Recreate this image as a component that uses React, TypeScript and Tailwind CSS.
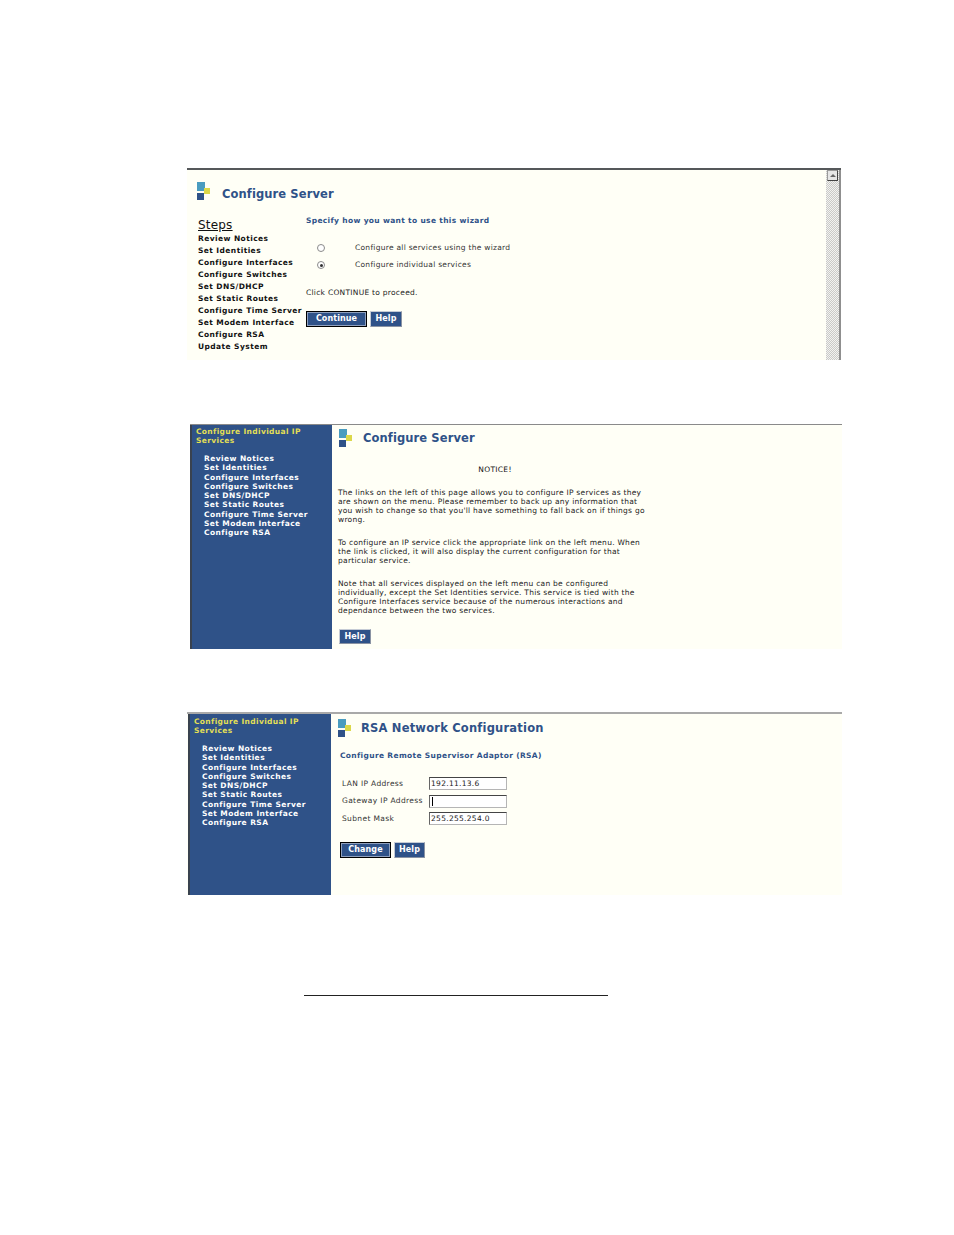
const font = { fontFamily: '"DejaVu Sans", Verdana, sans-serif' };

const wizardSteps = [
  "Review Notices",
  "Set Identities",
  "Configure Interfaces",
  "Configure Switches",
  "Set DNS/DHCP",
  "Set Static Routes",
  "Configure Time Server",
  "Set Modem Interface",
  "Configure RSA",
  "Update System",
];
const menuItems = wizardSteps.slice(0, 9);

const Logo = () => (
  <svg width="14" height="18" viewBox="0 0 14 18" className="shrink-0">
    <rect x="0" y="0" width="8" height="9" fill="#4a9cc0" />
    <rect x="7" y="6" width="6" height="6" fill="#dcd84a" />
    <rect x="0" y="11" width="7" height="7" fill="#2f5288" />
  </svg>
);

const BlueButton = ({ label, active, className }: { label: string; active?: boolean; className: string }) => (
  <div
    className={`flex items-center justify-center bg-[#2f5288] text-[8px] font-bold tracking-[0.1px] text-white ${
      active ? "border border-black shadow-[inset_0_0_0_1px_#8fa0bd]" : "border border-[#8a93a3] border-t-[#c5cbd5] border-l-[#c5cbd5]"
    } ${className}`}
  >
    {label}
  </div>
);

const Sidebar = ({ className }: { className: string }) => (
  <div className={`${className} shrink-0 border-l-2 border-[#39424f] bg-[#2f5288] pl-[4px]`}>
    <div className="text-[7.5px] leading-[8.5px] font-bold tracking-[0.35px] text-[#e3df55]">
      Configure Individual IP
      <br />
      Services
    </div>
    <div className="mt-[10px] ml-[8px] flex flex-col gap-[1.3px]">
      {menuItems.map((item) => (
        <div key={item} className="text-[7.5px] leading-[8px] font-bold tracking-[0.42px] whitespace-nowrap text-white">
          {item}
        </div>
      ))}
    </div>
  </div>
);

const Radio = ({ checked }: { checked?: boolean }) => (
  <div className="flex h-[8px] w-[8px] items-center justify-center rounded-full border border-[#8a8a8a] bg-white">
    {checked && <div className="h-[3px] w-[3px] rounded-full bg-[#333]" />}
  </div>
);

const Field = ({ label, value, focus }: { label: string; value: string; focus?: boolean }) => (
  <div className="flex h-[13px] items-center">
    <div className="w-[89px] pl-[2px] text-[7.5px] tracking-[0.35px] whitespace-nowrap text-[#333]">{label}</div>
    <div className="flex h-[13px] w-[78px] items-center border border-[#b5b5b5] border-t-[#444] border-l-[#666] bg-white pl-[1px] text-[7.5px] tracking-[0.3px] text-[#222]">
      {focus ? <div className="ml-[1px] h-[9px] w-px bg-black" /> : value}
    </div>
  </div>
);

const App = () => {
  return (
    <div className="h-[1235px] w-[954px] overflow-hidden bg-white pt-[168px]" style={font}>
      {/* wizard panel */}
      <div className="ml-[187px] flex h-[192px] w-[654px] border-t-2 border-t-[#55585a] bg-[#fffff6]">
        <div className="flex-1 pl-[11px]">
          <div className="mt-[12px] ml-[-1px] flex items-start gap-[11px]">
            <Logo />
            <div className="mt-[5px] text-[11.5px] leading-[14px] font-bold tracking-[0.1px] text-[#2f5288]">
              Configure Server
            </div>
          </div>
          <div className="mt-[17px] flex">
            <div className="w-[108px]">
              <div className="text-[12px] leading-[14px] tracking-[0.2px] text-[#111] underline">Steps</div>
              <div className="mt-[1px] flex flex-col">
                {wizardSteps.map((step) => (
                  <div key={step} className="h-[12px] text-[7.5px] leading-[12px] font-bold tracking-[0.42px] whitespace-nowrap text-[#111]">
                    {step}
                  </div>
                ))}
              </div>
            </div>
            <div className="flex-1">
              <div className="mt-[-2px] text-[7.5px] leading-[10px] font-bold tracking-[0.33px] text-[#2f5288]">
                Specify how you want to use this wizard
              </div>
              <div className="mt-[17px] flex items-center text-[7.5px] leading-[10px] tracking-[0.27px] text-[#333]">
                <div className="ml-[11px] w-[38px]">
                  <Radio />
                </div>
                Configure all services using the wizard
              </div>
              <div className="mt-[7px] flex items-center text-[7.5px] leading-[10px] tracking-[0.27px] text-[#333]">
                <div className="ml-[11px] w-[38px]">
                  <Radio checked />
                </div>
                Configure individual services
              </div>
              <div className="mt-[18px] text-[7.5px] leading-[10px] tracking-[0.27px] text-[#222]">
                Click CONTINUE to proceed.
              </div>
              <div className="mt-[13px] flex gap-[3px]">
                <BlueButton label="Continue" active className="h-[16px] w-[61px]" />
                <BlueButton label="Help" className="h-[16px] w-[32px]" />
              </div>
            </div>
          </div>
        </div>
        <div className="w-[15px] shrink-0 border-r-2 border-r-[#8f8f8f] bg-[repeating-conic-gradient(#c9c9c7_0_25%,#f2f2f0_0_50%)] bg-[length:2px_2px]">
          <div className="flex h-[11px] w-[11px] translate-x-[1px] items-center justify-center border border-[#9a9a9a] border-r-[#444] border-b-[#444] bg-[#e6e6e6]">
            <div className="h-0 w-0 border-x-[3px] border-b-[3px] border-x-transparent border-b-[#666]" />
          </div>
        </div>
      </div>

      {/* notice panel */}
      <div className="mt-[64px] ml-[190px] flex h-[225px] w-[652px] border-t border-t-[#8a8a8a] bg-[#fffff6]">
        <Sidebar className="w-[142px] pt-[3px]" />
        <div className="flex-1 pl-[6px]">
          <div className="mt-[4px] ml-[1px] flex items-start gap-[10px]">
            <Logo />
            <div className="mt-[2px] text-[11.5px] leading-[14px] font-bold tracking-[0.1px] text-[#2f5288]">
              Configure Server
            </div>
          </div>
          <div className="mt-[18px] w-[314px] text-center text-[7.5px] leading-[10px] tracking-[0.3px] text-[#111]">NOTICE!</div>
          <div className="mt-[13px] w-[312px] text-[7.5px] leading-[9px] tracking-[0.26px] whitespace-nowrap text-[#222]">
            The links on the left of this page allows you to configure IP services as they
            <br />
            are shown on the menu. Please remember to back up any information that
            <br />
            you wish to change so that you'll have something to fall back on if things go
            <br />
            wrong.
          </div>
          <div className="mt-[14px] text-[7.5px] leading-[9px] tracking-[0.26px] whitespace-nowrap text-[#222]">
            To configure an IP service click the appropriate link on the left menu. When
            <br />
            the link is clicked, it will also display the current configuration for that
            <br />
            particular service.
          </div>
          <div className="mt-[14px] text-[7.5px] leading-[9px] tracking-[0.26px] whitespace-nowrap text-[#222]">
            Note that all services displayed on the left menu can be configured
            <br />
            individually, except the Set Identities service. This service is tied with the
            <br />
            Configure Interfaces service because of the numerous interactions and
            <br />
            dependance between the two services.
          </div>
          <BlueButton label="Help" className="mt-[14px] ml-[1px] h-[15px] w-[32px]" />
        </div>
      </div>

      {/* rsa panel */}
      <div className="mt-[63px] ml-[187px] flex h-[183px] w-[655px] border-t-2 border-t-[#a9a9a9] bg-[#fffff6]">
        <Sidebar className="ml-[1px] w-[143px] pt-[4px]" />
        <div className="flex-1 pl-[9px]">
          <div className="mt-[5px] ml-[-2px] flex items-start gap-[9px]">
            <Logo />
            <div className="mt-[2px] text-[11.5px] leading-[14px] font-bold tracking-[0.2px] whitespace-nowrap text-[#2f5288]">
              RSA Network Configuration
            </div>
          </div>
          <div className="mt-[14px] text-[7.5px] leading-[10px] font-bold tracking-[0.34px] text-[#2f5288]">
            Configure Remote Supervisor Adaptor (RSA)
          </div>
          <div className="mt-[16px] flex flex-col gap-[4.5px]">
            <Field label="LAN IP Address" value="192.11.13.6" />
            <Field label="Gateway IP Address" value="" focus />
            <Field label="Subnet Mask" value="255.255.254.0" />
          </div>
          <div className="mt-[17px] flex gap-[3px]">
            <BlueButton label="Change" active className="h-[16px] w-[51px]" />
            <BlueButton label="Help" className="h-[16px] w-[31px]" />
          </div>
        </div>
      </div>

      <div className="mt-[100px] ml-[304px] h-px w-[304px] bg-[#222]" />
    </div>
  );
};

export default App;
